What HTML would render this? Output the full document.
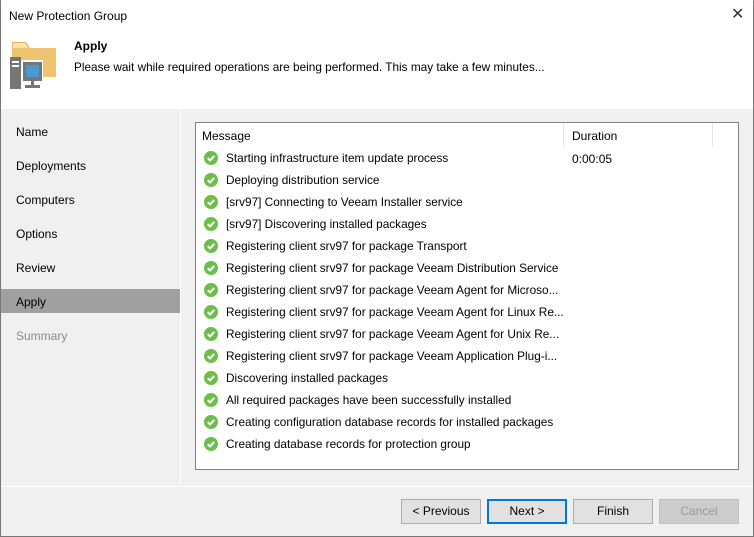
<!DOCTYPE html>
<html><head><style>
*{margin:0;padding:0;box-sizing:border-box}
html,body{width:754px;height:537px;overflow:hidden}
body{background:#f0f0f0;font-family:"Liberation Sans",sans-serif;font-size:12px;color:#000;position:relative}
.win{position:absolute;left:0;top:0;width:754px;height:537px;border:1px solid #777;border-top:1px solid #999}
.hdr{position:absolute;left:1px;top:0;width:752px;height:109px;background:#fff}
.abs{position:absolute;white-space:nowrap}
.nav{position:absolute;left:16px;font-size:12px}
.sel{position:absolute;left:1px;top:289px;width:179px;height:24px;background:#a0a0a0}
.vline{position:absolute;left:180px;top:109px;width:1px;height:377px;background:#fff}
.hline{position:absolute;left:1px;top:486px;width:752px;height:1px;background:#fff}
.box{position:absolute;left:195px;top:122px;width:544px;height:348px;background:#fff;border:1px solid #828282;overflow:hidden}
.row{position:absolute;left:8px;height:22px;line-height:22px;white-space:nowrap;width:530px}
.ic{position:absolute;left:0;top:4px;width:14px;height:14px}
.row span{position:absolute;left:22px;top:0;white-space:nowrap;font-size:11.8px}
.btn{position:absolute;top:499px;height:25px;border:1px solid #adadad;background:#e1e1e1;text-align:center;line-height:23px}
</style></head><body>
<div class="win"></div>
<div class="hdr"></div>
<div class="abs" style="left:9px;top:9px">New Protection Group</div>
<div class="abs" style="left:731px;top:4px;font-size:16px;color:#333">✕</div>
<svg class="abs" style="left:0;top:0" width="60" height="95" viewBox="0 0 60 95">
<path d="M12.5 42.5h13l3 4v2h-16z" fill="#fbe2a8" stroke="#d9b35f" stroke-width="1"/>
<rect x="12" y="48" width="44" height="29" fill="#f0c46e"/>
<rect x="10" y="57" width="11" height="32" fill="#767676"/>
<rect x="12" y="61" width="7" height="2" fill="#fff"/><rect x="12" y="65" width="7" height="2" fill="#fff"/>
<rect x="21" y="60" width="22" height="22" fill="#fff"/>
<rect x="23" y="62" width="19" height="19" fill="#767676"/>
<rect x="26" y="65" width="13" height="12" fill="#4b99cf"/>
<rect x="31" y="81" width="3" height="5" fill="#767676"/>
<rect x="25" y="85" width="15" height="3" fill="#767676"/>
</svg>
<div class="abs" style="left:74px;top:39px;font-weight:bold;font-size:12px">Apply</div>
<div class="abs" style="left:74px;top:60px;font-size:11.8px">Please wait while required operations are being performed. This may take a few minutes...</div>
<div class="sel"></div>
<div class="vline"></div><div class="hline"></div>
<div class="nav" style="top:125px">Name</div>
<div class="nav" style="top:159px">Deployments</div>
<div class="nav" style="top:193px">Computers</div>
<div class="nav" style="top:227px">Options</div>
<div class="nav" style="top:261px">Review</div>
<div class="nav" style="top:295px">Apply</div>
<div class="nav" style="top:329px;color:#8a8a8a">Summary</div>
<div class="box">
<div class="abs" style="left:6px;top:6px">Message</div>
<div class="abs" style="left:367px;top:0;width:1px;height:24px;background:#e5e5e5"></div>
<div class="abs" style="left:376px;top:6px">Duration</div>
<div class="abs" style="left:516px;top:0;width:1px;height:24px;background:#e5e5e5"></div>
<div class="abs" style="left:376px;top:29px">0:00:05</div>
<div id="rows"></div>
</div>
<div class="btn" style="left:401px;width:80px">&lt; Previous</div>
<div class="btn" style="left:487px;width:80px;border:2px solid #0078d7;line-height:21px">Next &gt;</div>
<div class="btn" style="left:573px;width:80px">Finish</div>
<div class="btn" style="left:659px;width:80px;background:#ccc;border-color:#bfbfbf;color:#9a9a9a">Cancel</div>
<script>
var m=["Starting infrastructure item update process","Deploying distribution service","[srv97] Connecting to Veeam Installer service","[srv97] Discovering installed packages","Registering client srv97 for package Transport","Registering client srv97 for package Veeam Distribution Service","Registering client srv97 for package Veeam Agent for Microso...","Registering client srv97 for package Veeam Agent for Linux Re...","Registering client srv97 for package Veeam Agent for Unix Re...","Registering client srv97 for package Veeam Application Plug-i...","Discovering installed packages","All required packages have been successfully installed","Creating configuration database records for installed packages","Creating database records for protection group"];
var h="";m.forEach(function(t,i){h+='<div class="row" style="top:'+(24+i*22)+'px"><svg class="ic" viewBox="0 0 14 14"><circle cx="7" cy="7" r="7" fill="#6cbf4a"/><path d="M3.8 7.2l2.2 2.2 4.2-4.4" fill="none" stroke="#fff" stroke-width="2"/></svg><span>'+t+'</span></div>'});
document.getElementById("rows").innerHTML=h;
</script>
</body></html>
